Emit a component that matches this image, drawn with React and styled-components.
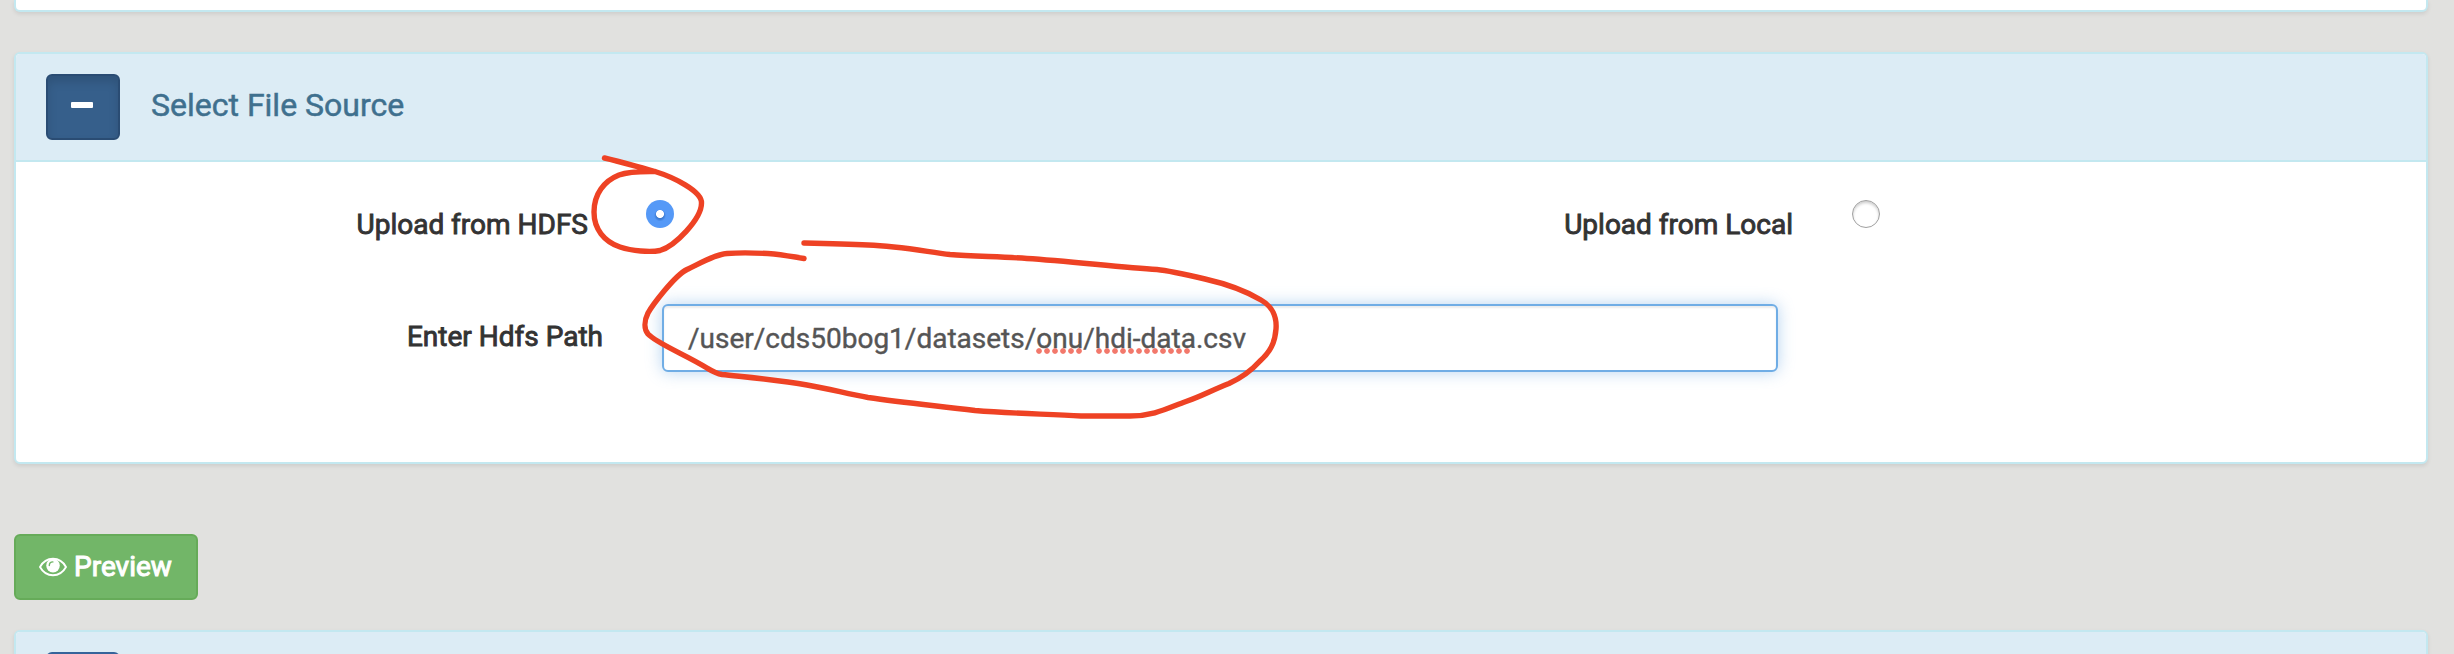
import React from "react";
import styled, { createGlobalStyle } from "styled-components";

const GlobalStyle = createGlobalStyle`
  * { box-sizing: border-box; }
  html, body { margin: 0; background: #e1e1df; overflow: hidden; }
  body { font-family: Roboto, "Liberation Sans", sans-serif; font-size: 28px; line-height: 40px; color: #333; }
`;

const Page = styled.main`
  position: relative;
  height: 654px;
  overflow: hidden;
  padding: 0 26px 0 14px;
  display: flex;
  flex-direction: column;
  align-items: flex-start;
`;

const Panel = styled.section`
  width: 100%;
  flex: none;
  height: ${(p) => p.$height}px;
  margin-bottom: ${(p) => p.$gap || 0}px;
  background: #fff;
  border: 2px solid #c3e8f0;
  border-top-width: ${(p) => (p.$cutTop ? 0 : 2)}px;
  border-radius: ${(p) => (p.$cutTop ? "0 0 6px 6px" : "6px")};
  box-shadow: 0 2px 4px rgba(0, 0, 0, 0.09);
`;

const PanelHeader = styled.header`
  display: flex;
  align-items: flex-start;
  gap: 31px;
  height: 108px;
  padding: 20px 30px;
  background: #dcecf5;
  border-bottom: 2px solid #c3e8f0;
  border-radius: 4px 4px 0 0;
`;

const ToggleButton = styled.button`
  width: 74px;
  height: 66px;
  padding: 0 2px 4px 0;
  display: flex;
  align-items: center;
  justify-content: center;
  border-radius: 6px;
  border: 2px solid ${(p) => (p.$active ? "#2a4c73" : "#35639a")};
  background: ${(p) => (p.$active ? "#365f8b" : "#3f6ea8")};
  box-shadow: ${(p) => (p.$active ? "inset 0 6px 10px rgba(0, 0, 0, 0.125)" : "none")};
`;

const MinusMark = styled.span`
  width: 22px;
  height: 6px;
  border-radius: 1px;
  background: #fff;
`;

const PanelTitle = styled.h3`
  margin: 13px 0 0;
  font-size: 32px;
  line-height: 36px;
  font-weight: 400;
  color: #3f708e;
  -webkit-text-stroke: 0.5px #3f708e;
`;

const FieldRow = styled.div`
  display: flex;
  align-items: flex-start;
  height: ${(p) => p.$height}px;
`;

const SourceForm = styled.form`
  padding-top: 38px;
`;

const Label = styled.label`
  width: ${(p) => p.$width}px;
  padding-top: ${(p) => p.$top}px;
  text-align: right;
  white-space: nowrap;
  -webkit-text-stroke: 0.9px #333;
`;

const Radio = styled.input`
  appearance: none;
  width: 28px;
  height: 28px;
  margin: 0 0 0 ${(p) => p.$gap}px;
  flex: none;
  border-radius: 50%;
  border: 1px solid #a0a0a0;
  background: #fff;
  box-shadow: inset 0 2px 3px rgba(0, 0, 0, 0.2);
  &:checked {
    border: 0;
    background: radial-gradient(circle at 50% 50%, #fff 3.6px, rgba(255, 255, 255, 0) 4.4px),
      radial-gradient(circle at 50% 55%, #3a78cf 3.6px, #5599f7 6px);
    box-shadow: none;
  }
`;

const PathInput = styled.div`
  width: 1116px;
  height: 68px;
  margin-left: 59px;
  padding: 13px 24px 11px;
  border: 2px solid #70ade5;
  border-radius: 6px;
  background: #fff;
  color: #555;
  white-space: nowrap;
  -webkit-text-stroke: 0.4px #555;
  box-shadow: inset 0 2px 2px rgba(0, 0, 0, 0.075), 0 0 16px rgba(102, 165, 225, 0.48);
`;

const Misspelled = styled.span`
  position: relative;
  &::after {
    content: "";
    position: absolute;
    left: ${(p) => p.$left}px;
    top: 26px;
    width: ${(p) => p.$dots * 8}px;
    height: 6px;
    background: radial-gradient(circle at 3px 3px, #f2786b 2.4px, rgba(242, 120, 107, 0) 3.2px) 0 0 / 8px 6px repeat-x;
  }
`;

const PreviewButton = styled.button`
  flex: none;
  display: flex;
  align-items: center;
  gap: 7px;
  width: 184px;
  height: 66px;
  margin-bottom: 30px;
  padding: 0 0 0 23px;
  border: 2px solid #66ab59;
  border-radius: 6px;
  background: #72b668;
  color: #fff;
  font: 400 28px/40px Roboto, "Liberation Sans", sans-serif;
  -webkit-text-stroke: 1px #fff;
`;

const Ink = styled.svg`
  position: absolute;
  left: 0;
  top: 0;
  pointer-events: none;
`;

function EyeIcon() {
  return (
    <svg width="28" height="20" viewBox="0 0 28 20" fill="none">
      <path d="M1 10C4 4.6 8.8 1.8 14 1.8S24 4.6 27 10C24 15.4 19.2 18.2 14 18.2S4 15.4 1 10Z" stroke="#fff" strokeWidth="1.9" strokeLinejoin="round" />
      <circle cx="14" cy="8.6" r="6.8" fill="#fff" />
      <path d="M10.3 8.5C10.3 6.4 11.8 4.9 13.9 4.9" stroke="#72b668" strokeWidth="1.4" strokeLinecap="round" />
    </svg>
  );
}

function InkMarks() {
  return (
    <Ink width="2454" height="654" viewBox="0 0 2454 654" fill="none" stroke="#ee4224" strokeWidth="5.4" strokeLinecap="round" strokeLinejoin="round">
      <path d="M604.5 158C620 161.5 638 167 655 171.5C673 177 702 191 701.500 203C701.500 219 675 246 660 250.500C650 252.500 632 251 620 247C604 241.500 594 229 594 212C594 194 604 181 619 175C630 171 642 171.500 655 171.500" />
      <path d="M804 258.500C795 257 786 255.500 774 254C760 253 740 252.500 727 253.500C714 254.500 699 264 687 269.500C674 276 652 306 648 313C644 321 644 329 648 334C656 343 686 355 707 368C712 371 716 373.500 722 374.500C750 377.500 780 380 807 385C830 389 848 394 868 397.500C902 402.500 934 405.500 975 410.500C1012 413.500 1048 414 1081 416L1130 416C1154 416 1168 408 1186 401.500C1202 396 1210 391 1229 383.500C1241 378 1251 371 1260 361C1270 352 1275 343 1276 329C1277 317 1272 306 1261 300C1246 291 1227 284 1205 279C1188 275 1168 270.500 1157 269.500C1122 267.500 1068 261 1027 258.500C1000 256.500 972 256.500 950 254.500C928 252 900 246 868 245C846 244 825 243.500 804 243" />
    </Ink>
  );
}

export default function App() {
  return (
    <Page>
      <GlobalStyle />
      <Panel $height={12} $gap={40} $cutTop />
      <Panel $height={412} $gap={70}>
        <PanelHeader>
          <ToggleButton $active aria-label="Collapse">
            <MinusMark />
          </ToggleButton>
          <PanelTitle>Select File Source</PanelTitle>
        </PanelHeader>
        <SourceForm>
          <FieldRow $height={104}>
            <Label $width={572} $top={5}>Upload from HDFS</Label>
            <Radio $gap={58} type="radio" name="source" defaultChecked />
            <Label $width={1119} $top={5}>Upload from Local</Label>
            <Radio $gap={59} type="radio" name="source" />
          </FieldRow>
          <FieldRow $height={68}>
            <Label $width={587} $top={13}>Enter Hdfs Path</Label>
            <PathInput role="textbox">
              /user/cds50bog1/datasets/<Misspelled $left={0} $dots={6}>onu</Misspelled>/<Misspelled $left={1} $dots={12}>hdi-data</Misspelled>.csv
            </PathInput>
          </FieldRow>
        </SourceForm>
      </Panel>
      <PreviewButton>
        <EyeIcon />
        Preview
      </PreviewButton>
      <Panel $height={412}>
        <PanelHeader>
          <ToggleButton aria-label="Expand" />
        </PanelHeader>
      </Panel>
      <InkMarks />
    </Page>
  );
}
